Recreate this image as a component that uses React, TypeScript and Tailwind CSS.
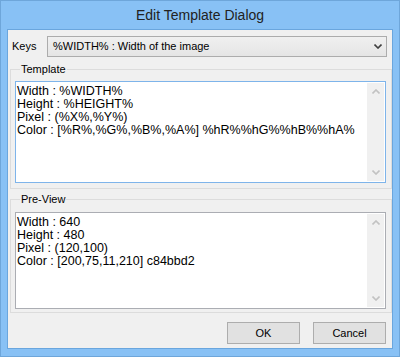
const font = { fontFamily: '"Liberation Sans", Arial, sans-serif' };

const templateLines = [
  "Width : %WIDTH%",
  "Height : %HEIGHT%",
  "Pixel : (%X%,%Y%)",
  "Color : [%R%,%G%,%B%,%A%] %hR%%hG%%hB%%hA%",
];

const previewLines = ["Width : 640", "Height : 480", "Pixel : (120,100)", "Color : [200,75,11,210] c84bbd2"];

function Chevron({ up, className }: { up?: boolean; className: string }) {
  return (
    <svg width="8" height="5" viewBox="0 0 8 5" className={className}>
      <path
        d={up ? "M0.5 4.5 L4 1 L7.5 4.5" : "M0.5 0.5 L4 4 L7.5 0.5"}
        fill="none"
        stroke="currentColor"
        strokeWidth="1.6"
      />
    </svg>
  );
}

function TextBox({ lines, focused, height }: { lines: string[]; focused?: boolean; height: string }) {
  return (
    <div
      className={`flex ${height} border bg-white ${focused ? "border-[#7eb4ea]" : "border-[#abadb3]"}`}
    >
      <div className="flex-1 pl-[1px] pt-[3px] text-[12.5px] leading-[13px] text-black whitespace-pre">
        {lines.map((l) => (
          <div key={l}>{l}</div>
        ))}
      </div>
      <div className="m-[1px] flex w-[17px] flex-col items-center justify-between bg-[#f0f0f0] py-[6px] text-[#c2c2c2]">
        <Chevron up className="" />
        <Chevron className="" />
      </div>
    </div>
  );
}

function Group({ label, children, className }: { label: string; children: React.ReactNode; className: string }) {
  return (
    <fieldset className={`ml-[2px] border border-[#dcdcdc] pl-[4px] pr-[5px] ${className}`}>
      <legend className="ml-[5px] px-[1px] text-[11px] leading-[14px] text-black">{label}</legend>
      {children}
    </fieldset>
  );
}

export default function App() {
  return (
    <div
      style={font}
      className="flex h-[357px] w-[400px] flex-col border border-[#6ea6da] bg-[#88c1f5] px-[6px] pb-[7px]"
    >
      <div className="flex h-[28px] items-center justify-center text-[14px] text-[#222]">Edit Template Dialog</div>
      <div className="flex h-[320px] flex-col border border-[#6aa6de] bg-[#f0f0f0] pt-[6px]">
        <div className="flex h-[21px] items-center pl-[4px] pr-[5px]">
          <span className="w-[35px] text-[11px] text-black">Keys</span>
          <div className="flex h-[21px] flex-1 items-center justify-between border border-[#acacac] bg-gradient-to-b from-[#f0f0f0] to-[#e5e5e5] pl-[5px] pr-[4px] text-[11px] text-black">
            <span>%WIDTH% : Width of the image</span>
            <Chevron className="text-[#404040]" />
          </div>
        </div>

        <Group label="Template" className="mt-[5px] pb-[5px]">
          <div className="mt-[5px]">
            <TextBox lines={templateLines} focused height="h-[102px]" />
          </div>
        </Group>

        <Group label="Pre-View" className="mt-[3px] pb-[3px]">
          <div className="mt-[6px]">
            <TextBox lines={previewLines} height="h-[97px]" />
          </div>
        </Group>

        <div className="mt-[9px] flex justify-end gap-[13px] pr-[6px]">
          <button className="h-[22px] w-[73px] border border-[#adadad] bg-[#e1e1e1] text-[11px] text-black">OK</button>
          <button className="h-[22px] w-[73px] border border-[#adadad] bg-[#e1e1e1] text-[11px] text-black">Cancel</button>
        </div>
      </div>
    </div>
  );
}
